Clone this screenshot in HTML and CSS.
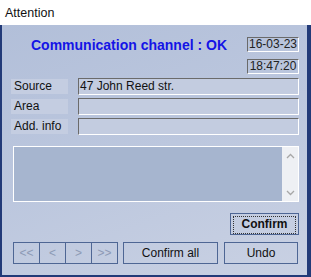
FILE: index.html
```html
<!DOCTYPE html>
<html lang="en">
<head>
  <meta charset="UTF-8" />
  <title>Attention</title>
  <link rel="stylesheet" href="styles.css">
</head>
<body>
  <div class="window">
    <div class="titlebar">Attention</div>

    <div class="panel">
      <div class="head">
        <span class="status">Communication channel : OK</span>
        <div class="stamp">16-03-23</div>
      </div>
      <div class="time-row">
        <div class="stamp">18:47:20</div>
      </div>

      <div class="fields">
        <div class="field">
          <span class="label">Source</span>
          <div class="input">47 John Reed str.</div>
        </div>
        <div class="field">
          <span class="label">Area</span>
          <div class="input"></div>
        </div>
        <div class="field">
          <span class="label">Add. info</span>
          <div class="input"></div>
        </div>
      </div>

      <div class="memo">
        <div class="memo-text"></div>
        <div class="scroll">
          <svg width="9" height="6" viewBox="0 0 9 6"><path d="M1 5 L4.5 1.5 L8 5" fill="none" stroke="#a7a7a7" stroke-width="1.3"/></svg>
          <svg width="9" height="6" viewBox="0 0 9 6"><path d="M1 1 L4.5 4.5 L8 1" fill="none" stroke="#a7a7a7" stroke-width="1.3"/></svg>
        </div>
      </div>

      <div class="confirm-row">
        <button class="btn btn-confirm"><span>Confirm</span></button>
      </div>

      <div class="bottom-row">
        <div class="nav">
          <button class="btn nav-btn">&lt;&lt;</button>
          <button class="btn nav-btn">&lt;</button>
          <button class="btn nav-btn">&gt;</button>
          <button class="btn nav-btn">&gt;&gt;</button>
        </div>
        <button class="btn btn-all">Confirm all</button>
        <button class="btn btn-undo">Undo</button>
      </div>
    </div>
  </div>
</body>
</html>
```

FILE: styles.css
```css
:root {
  --frame: #223a78;
  --edge: #4e6694;
  --text: #111;
}

body {
  margin: 0;
  font-family: 'Liberation Sans', Arial, sans-serif;
  font-size: 12px;
  color: var(--text);
}

.window {
  width: 311px;
  height: 277px;
  display: flex;
  flex-direction: column;
}

.titlebar {
  height: 25px;
  box-sizing: border-box;
  background: #fff;
  padding: 6px 0 0 5px;
  font-size: 12.5px;
  line-height: 14px;
}

.panel {
  flex: 1;
  box-sizing: border-box;
  border-left: 2px solid var(--frame);
  border-right: 4px solid var(--frame);
  border-bottom: 2px solid var(--frame);
  background: linear-gradient(160deg, #b2bfd9 0%, #bcc7de 50%, #c9d1e3 100%);
  padding: 12px 8px 0 9px;
  display: flex;
  flex-direction: column;
}

.head {
  display: flex;
  align-items: center;
  height: 15px;
}

.status {
  padding-left: 20px;
  color: #1414e6;
  font-weight: bold;
  font-size: 14px;
}

.stamp {
  width: 52px;
  height: 15px;
  box-sizing: border-box;
  border: 1px solid #fff;
  border-top-color: #6a6a6a;
  border-left-color: #6a6a6a;
  text-align: center;
  line-height: 13px;
  font-size: 12px;
  color: #222;
  margin-left: auto;
}

.time-row {
  display: flex;
  margin-top: 7px;
}

.fields {
  margin-top: 4px;
  display: flex;
  flex-direction: column;
  gap: 3px;
}

.field {
  display: flex;
  align-items: center;
  height: 17px;
}

.label {
  width: 57px;
  height: 15px;
  line-height: 15px;
  padding-left: 3px;
  box-sizing: border-box;
  background: #c4cde1;
  margin-right: 10px;
}

.input {
  flex: 1;
  height: 17px;
  box-sizing: border-box;
  border: 1px solid #fff;
  border-top-color: #6b6b6b;
  border-left-color: #6b6b6b;
  background: #c3cce0;
  line-height: 15px;
  padding-left: 1px;
}

.memo {
  margin: 11px 0 0 2px;
  height: 56px;
  box-sizing: border-box;
  border: 1px solid #fff;
  display: flex;
}

.memo-text {
  flex: 1;
  background: #a6b5cf;
}

.scroll {
  width: 16px;
  background: #eef0f4;
  display: flex;
  flex-direction: column;
  justify-content: space-between;
  align-items: center;
  padding: 6px 0 5px;
}

.btn {
  font-family: inherit;
  font-size: 12px;
  color: #111;
  background: transparent;
  border: 1px solid var(--edge);
  height: 22px;
  padding: 0;
  margin: 0;
  box-sizing: border-box;
}

.confirm-row {
  display: flex;
  justify-content: flex-end;
  margin-top: 11px;
}

.btn-confirm {
  width: 69px;
  font-weight: bold;
  padding: 2px;
}

.btn-confirm span {
  display: block;
  height: 16px;
  line-height: 14px;
  border: 1px dotted #333;
}

.bottom-row {
  display: flex;
  margin: 7px 0 0 2px;
}

.nav {
  display: flex;
}

.nav-btn {
  width: 27px;
  color: #8d9ab5;
  margin-right: -1px;
}

.btn-all {
  width: 95px;
  margin-left: 6px;
}

.btn-undo {
  width: 74px;
  margin-left: 6px;
}
```
